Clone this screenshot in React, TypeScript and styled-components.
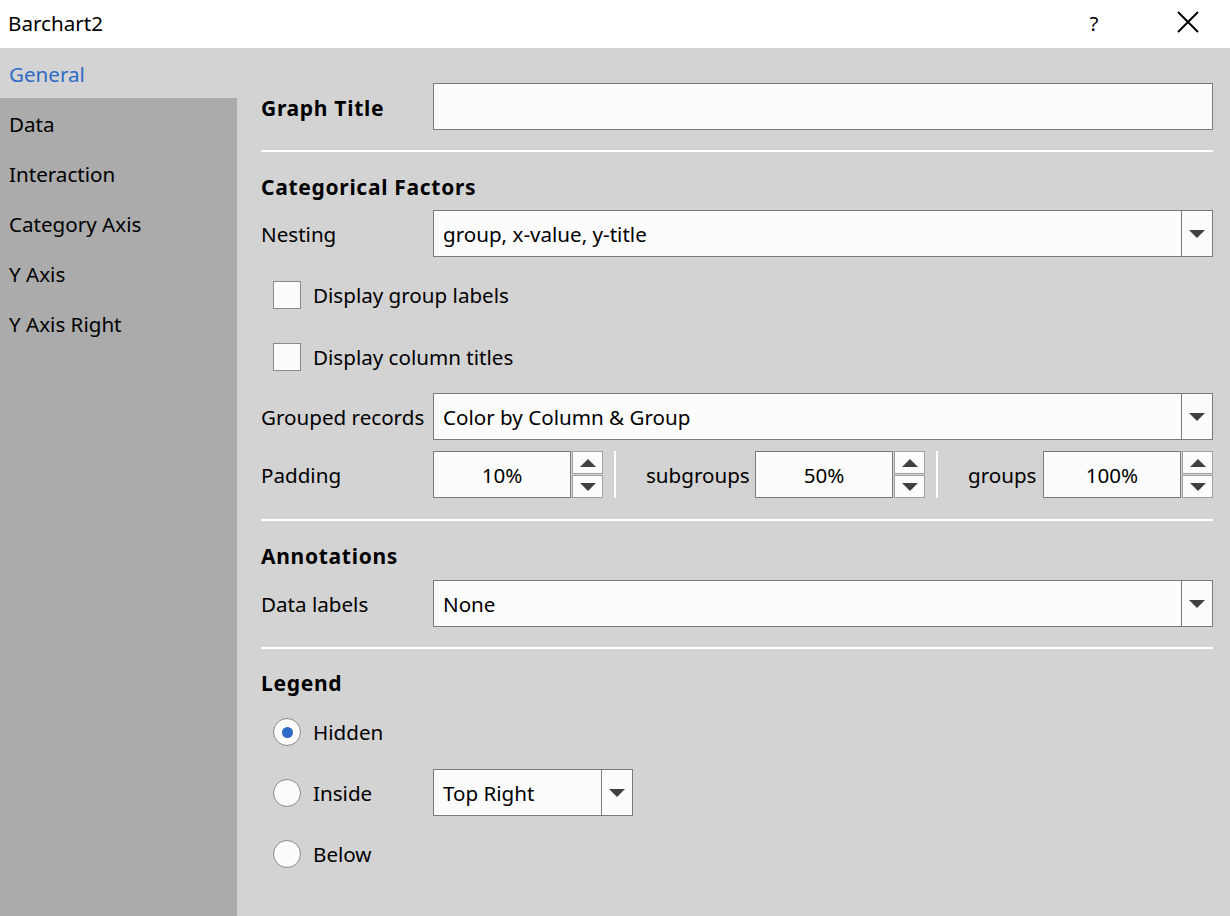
import React from "react";
import styled, { createGlobalStyle } from "styled-components";

const Global = createGlobalStyle`
  html, body { margin: 0; padding: 0; }
  body {
    font-family: "Noto Sans", "Open Sans", "DejaVu Sans", sans-serif;
    color: #000;
    background: #d3d3d3;
  }
`;

const FONT = 20.6;

const Window = styled.div`
  width: 1230px;
  height: 916px;
  display: flex;
  flex-direction: column;
  overflow: hidden;
  font-size: ${FONT}px;
`;

const TitleBar = styled.div`
  height: 48px;
  background: #ffffff;
  display: flex;
  align-items: center;
  padding-left: 8px;
  flex-shrink: 0;
`;

const TitleText = styled.div`
  flex: 1;
  margin-top: -3px;
`;

const HelpButton = styled.div`
  width: 20px;
  text-align: center;
  margin-right: 72px;
  margin-top: -2px;
`;

const CloseButton = styled.div`
  width: 24px;
  height: 24px;
  margin-right: 30px;
  margin-top: -4px;
  display: flex;
  align-items: center;
  justify-content: center;
`;

const Body = styled.div`
  flex: 1;
  display: flex;
`;

const Sidebar = styled.div`
  width: 237px;
  background: #ababab;
  display: flex;
  flex-direction: column;
  flex-shrink: 0;
`;

const NavItem = styled.div<{ $active?: boolean }>`
  height: 50px;
  display: flex;
  align-items: center;
  padding: 2px 0 0 9px;
  box-sizing: border-box;
  background: ${(p) => (p.$active ? "#d3d3d3" : "transparent")};
  color: ${(p) => (p.$active ? "#2d6bc6" : "#000")};
`;

const Content = styled.div`
  flex: 1;
  background: #d3d3d3;
  padding: 0 18px 0 24px;
  display: flex;
  flex-direction: column;
`;

const Row = styled.div<{ $mt: number; $h?: number }>`
  margin-top: ${(p) => p.$mt}px;
  height: ${(p) => p.$h ?? 47}px;
  display: flex;
  align-items: center;
  flex-shrink: 0;
`;

const Label = styled.div<{ $w?: number; $bold?: boolean }>`
  width: ${(p) => p.$w ?? 172}px;
  flex-shrink: 0;
  padding-top: ${(p) => (p.$bold ? 2 : 0)}px;
  font-weight: ${(p) => (p.$bold ? 700 : 400)};
  ${(p) => (p.$bold ? "font-size: 21px; letter-spacing: 0.7px;" : "")}
  white-space: nowrap;
`;

const Heading = styled.div<{ $mt: number }>`
  margin-top: ${(p) => p.$mt}px;
  height: 24px;
  box-sizing: border-box;
  line-height: 24px;
  padding-top: 0px;
  font-size: 21px;
  letter-spacing: 0.7px;
  font-weight: 700;
  flex-shrink: 0;
  display: flex;
  align-items: center;
`;

const Separator = styled.div<{ $mt: number }>`
  margin-top: ${(p) => p.$mt}px;
  height: 2px;
  background: #ffffff;
  flex-shrink: 0;
`;

const TextInput = styled.div`
  flex: 1;
  height: 47px;
  box-sizing: border-box;
  background: #fcfcfc;
  border: 1px solid #7a7a7a;
`;

const Combo = styled.div<{ $w?: number }>`
  ${(p) => (p.$w ? `width: ${p.$w}px;` : "flex: 1;")}
  height: 47px;
  box-sizing: border-box;
  background: #fcfcfc;
  border: 1px solid #7a7a7a;
  display: flex;
  align-items: center;
`;

const ComboText = styled.div`
  flex: 1;
  padding: 0 0 0 9px;
  white-space: nowrap;
`;

const ComboArrow = styled.div`
  width: 30px;
  height: 100%;
  border-left: 1px solid #7a7a7a;
  display: flex;
  align-items: center;
  justify-content: center;
`;

const CheckRow = styled.div<{ $mt: number }>`
  margin-top: ${(p) => p.$mt}px;
  height: 28px;
  display: flex;
  align-items: center;
  padding-left: 12px;
  flex-shrink: 0;
`;

const CheckText = styled.div`
  white-space: nowrap;
`;

const CheckBox = styled.div`
  width: 28px;
  height: 28px;
  box-sizing: border-box;
  border: 1px solid #8a8a8a;
  background: #fcfcfc;
  margin-right: 12px;
  flex-shrink: 0;
`;

const Radio = styled.div<{ $on?: boolean }>`
  width: 28px;
  height: 28px;
  box-sizing: border-box;
  border-radius: 50%;
  border: 1px solid #8a8a8a;
  background: #fcfcfc;
  margin-right: 12px;
  display: flex;
  align-items: center;
  justify-content: center;
  flex-shrink: 0;
  &::after {
    content: "";
    display: ${(p) => (p.$on ? "block" : "none")};
    width: 11px;
    height: 11px;
    border-radius: 50%;
    background: #2d6bc6;
  }
`;

const RadioLabel = styled.div<{ $w?: number }>`
  ${(p) => (p.$w ? `width: ${p.$w}px;` : "")}
  flex-shrink: 0;
`;

const Spin = styled.div`
  display: flex;
  height: 47px;
  flex-shrink: 0;
`;

const SpinInput = styled.div`
  width: 138px;
  height: 47px;
  box-sizing: border-box;
  border: 1px solid #7a7a7a;
  background: #fcfcfc;
  display: flex;
  align-items: center;
  justify-content: center;
`;

const SpinButtons = styled.div`
  width: 31px;
  margin-left: 1px;
  display: flex;
  flex-direction: column;
  gap: 1px;
`;

const SpinButton = styled.div`
  flex: 1;
  box-sizing: border-box;
  border: 1px solid #a0a0a0;
  background: #fcfcfc;
  display: flex;
  align-items: center;
  justify-content: center;
`;

const VSep = styled.div`
  width: 2px;
  height: 47px;
  background: #ffffff;
  margin: 0 30px 0 11px;
  flex-shrink: 0;
`;

const Arrow = ({ up }: { up?: boolean }) => (
  <svg width="16" height="8" viewBox="0 0 16 8">
    <polygon points={up ? "0,8 16,8 8,0" : "0,0 16,0 8,8"} fill="#404040" />
  </svg>
);

const SpinBox = ({ value }: { value: string }) => (
  <Spin>
    <SpinInput>{value}</SpinInput>
    <SpinButtons>
      <SpinButton>
        <Arrow up />
      </SpinButton>
      <SpinButton>
        <Arrow />
      </SpinButton>
    </SpinButtons>
  </Spin>
);

const ComboBox = ({ value, w }: { value: string; w?: number }) => (
  <Combo $w={w}>
    <ComboText>{value}</ComboText>
    <ComboArrow>
      <Arrow />
    </ComboArrow>
  </Combo>
);

const navItems = ["General", "Data", "Interaction", "Category Axis", "Y Axis", "Y Axis Right"];

export default function App() {
  return (
    <>
      <Global />
      <Window>
        <TitleBar>
          <TitleText>Barchart2</TitleText>
          <HelpButton>?</HelpButton>
          <CloseButton>
            <svg width="22" height="22" viewBox="0 0 22 22">
              <path d="M1 1 L21 21 M21 1 L1 21" stroke="#000" strokeWidth="2" />
            </svg>
          </CloseButton>
        </TitleBar>
        <Body>
          <Sidebar>
            {navItems.map((n, i) => (
              <NavItem key={n} $active={i === 0}>
                {n}
              </NavItem>
            ))}
          </Sidebar>
          <Content>
            <Row $mt={35}>
              <Label $bold>Graph Title</Label>
              <TextInput />
            </Row>
            <Separator $mt={20} />
            <Heading $mt={23}>Categorical Factors</Heading>
            <Row $mt={11}>
              <Label>Nesting</Label>
              <ComboBox value="group, x-value, y-title" />
            </Row>
            <CheckRow $mt={24}>
              <CheckBox />
              <CheckText>Display group labels</CheckText>
            </CheckRow>
            <CheckRow $mt={34}>
              <CheckBox />
              <CheckText>Display column titles</CheckText>
            </CheckRow>
            <Row $mt={22}>
              <Label>Grouped records</Label>
              <ComboBox value="Color by Column & Group" />
            </Row>
            <Row $mt={11}>
              <Label>Padding</Label>
              <SpinBox value="10%" />
              <VSep />
              <Label $w={109}>subgroups</Label>
              <SpinBox value="50%" />
              <VSep />
              <Label $w={75}>groups</Label>
              <SpinBox value="100%" />
            </Row>
            <Separator $mt={21} />
            <Heading $mt={23}>Annotations</Heading>
            <Row $mt={12}>
              <Label>Data labels</Label>
              <ComboBox value="None" />
            </Row>
            <Separator $mt={20} />
            <Heading $mt={22}>Legend</Heading>
            <CheckRow $mt={23}>
              <Radio $on />
              <RadioLabel>Hidden</RadioLabel>
            </CheckRow>
            <Row $mt={23}>
              <CheckRow $mt={0}>
                <Radio />
                <RadioLabel $w={120}>Inside</RadioLabel>
              </CheckRow>
              <ComboBox value="Top Right" w={200} />
            </Row>
            <CheckRow $mt={24}>
              <Radio />
              <RadioLabel>Below</RadioLabel>
            </CheckRow>
          </Content>
        </Body>
      </Window>
    </>
  );
}
